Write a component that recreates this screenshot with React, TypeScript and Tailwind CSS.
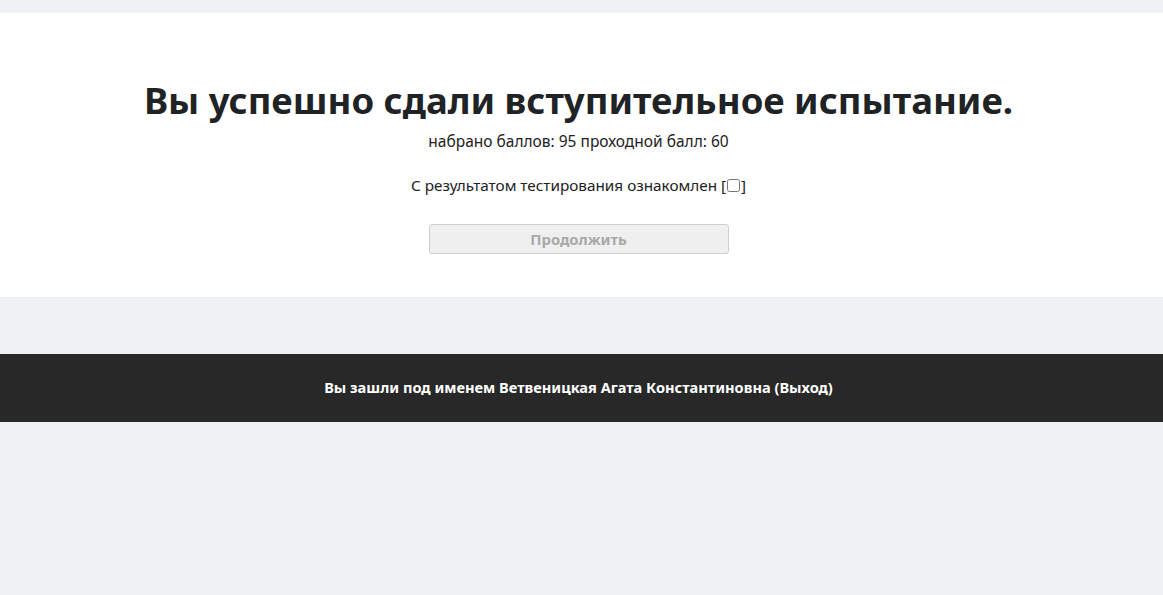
import { useState } from 'react';

export default function App() {
  const [agreed, setAgreed] = useState(false);

  return (
    <div className="min-h-[595px] bg-[#f0f1f4] pt-[13px] font-['Noto_Sans',sans-serif] text-[#222]">
      <div className="bg-white pt-[63px] pr-[6px] pb-[43px] text-center">
        <h1 className="text-[36.5px] font-bold leading-[48px] text-[#1f2326]">
          Вы успешно сдали вступительное испытание.
        </h1>
        <p className="mt-[7px] text-[15.5px] leading-[20px] text-[#222]">
          набрано баллов: 95 проходной балл: 60
        </p>
        <p className="mt-[24px] text-[15.3px] leading-[20px] text-[#222]">
          С результатом тестирования ознакомлен [
          <input
            type="checkbox"
            checked={agreed}
            onChange={(e) => setAgreed(e.target.checked)}
            className="mx-[1px] h-[13px] w-[13px] align-[-1px]"
          />
          ]
        </p>
        <button
          disabled={!agreed}
          className="mt-[29px] h-[30px] w-[300px] rounded-[3px] border border-[#cfcfcf] bg-[#efefef] text-[14.8px] font-bold text-[#a9a9a9]"
        >
          Продолжить
        </button>
      </div>
      <div className="h-[57px]" />
      <footer className="flex h-[68px] items-center justify-center bg-[#282828] pr-[6px] text-[14.6px] font-bold text-white">
        Вы зашли под именем Ветвеницкая Агата Константиновна (Выход)
      </footer>
    </div>
  );
}
